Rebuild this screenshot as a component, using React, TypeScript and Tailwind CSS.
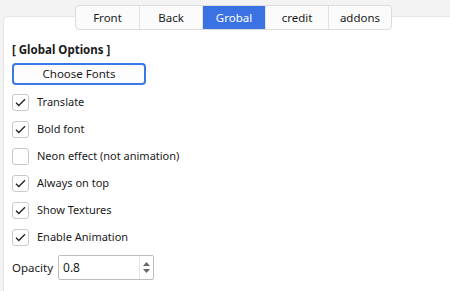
import React from "react";

const tabs = ["Front", "Back", "Grobal", "credit", "addons"];
const opts: [string, boolean][] = [
  ["Translate", true],
  ["Bold font", true],
  ["Neon effect (not animation)", false],
  ["Always on top", true],
  ["Show Textures", true],
  ["Enable Animation", true],
];

function Check({ on }: { on: boolean }) {
  return (
    <div className="w-[17px] h-[17px] rounded-[3px] border border-[#c9c9c9] bg-white flex items-center justify-center">
      {on && (
        <svg width="11" height="9" viewBox="0 0 11 9">
          <path d="M1 4.8 L3.8 7.5 L10 1.2" fill="none" stroke="#222" strokeWidth="1.3" />
        </svg>
      )}
    </div>
  );
}

export default function App() {
  return (
    <div
      className="w-[450px] h-[291px] bg-[#f3f3f3] relative overflow-hidden text-[12px] text-[#1a1a1a]"
      style={{ fontFamily: '"Noto Sans", "Open Sans", sans-serif' }}
    >
      <div className="absolute left-[3px] top-[16px] right-0 bottom-0 bg-white rounded-tl-[5px] border-l border-t border-[#e6e6e6]" />
      <div className="absolute left-[75px] top-[5px] flex h-[25px] rounded-[4px] border border-[#dcdcdc] bg-[#fbfbfb] overflow-hidden">
        {tabs.map((t, i) => (
          <div
            key={t}
            className={
              "w-[63px] flex items-center justify-center text-[11.5px] " +
              (i === 2 ? "bg-[#3a72e4] text-white" : "text-[#1a1a1a]") +
              (i > 0 ? " border-l border-[#e2e2e2]" : "")
            }
          >
            {t}
          </div>
        ))}
      </div>
      <div className="relative pt-[42px] pl-[12px]">
        <div className="font-bold text-[11.5px] leading-[16px]">[ Global Options ]</div>
        <div className="mt-[5px] w-[134px] h-[22px] rounded-[4px] border-2 border-[#3a78e6] bg-[#fdfdfd] flex items-center justify-center text-[11.5px]">
          Choose Fonts
        </div>
        <div className="mt-[9px] flex flex-col gap-[10px]">
          {opts.map(([l, on]) => (
            <div key={l} className="flex items-center h-[17px]">
              <Check on={on} />
              <span className="ml-[8px] text-[11px]">{l}</span>
            </div>
          ))}
        </div>
        <div className="mt-[9px] flex items-center">
          <span className="text-[11.5px]">Opacity</span>
          <div className="ml-[5px] w-[96px] h-[25px] border border-[#bdbdbd] rounded-[2px] flex items-center">
            <span className="flex-1 pl-[4px]">0.8</span>
            <div className="w-[14px] h-full flex flex-col items-center justify-center gap-[3px] border-l border-[#e5e5e5]">
              <svg width="7" height="4" viewBox="0 0 7 4"><path d="M0 4 L3.5 0 L7 4Z" fill="#666" /></svg>
              <svg width="7" height="4" viewBox="0 0 7 4"><path d="M0 0 L3.5 4 L7 0Z" fill="#666" /></svg>
            </div>
          </div>
        </div>
      </div>
    </div>
  );
}
